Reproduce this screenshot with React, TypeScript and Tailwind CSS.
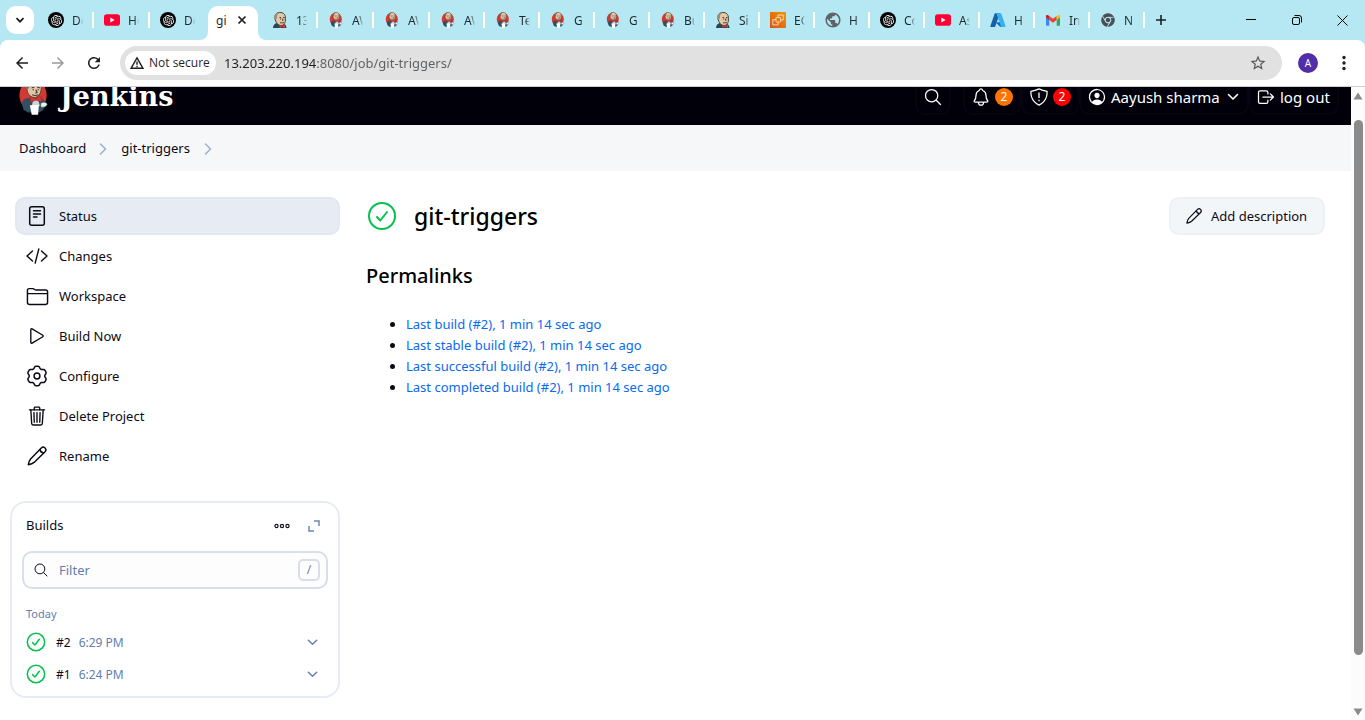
import type { ReactNode } from "react";
import { SiOpenai } from "react-icons/si";
import { FaChrome } from "react-icons/fa";
import { MdPublic, MdStarBorder, MdArrowBack, MdArrowForward, MdRefresh } from "react-icons/md";
import {
  IoSearchOutline,
  IoNotificationsOutline,
  IoShieldOutline,
  IoPersonCircleOutline,
  IoLogOutOutline,
  IoTrashOutline,
  IoFolderOutline,
  IoPlayOutline,
} from "react-icons/io5";

/* ---------- favicons ---------- */

function Butler({ className }: { className: string }) {
  return (
    <svg viewBox="0 0 32 40" className={className} aria-hidden="true">
      <ellipse cx="15.500" cy="18" rx="15" ry="17" fill="#d33833" />
      <path d="M3 27c1-4 4-6 8-6h9c6 0 9 3 10 8l-4 6-4 2H10l-5-3z" fill="#335061" />
      <path d="M8.500 10C8 4 12 .5 17 1c6 .6 8 5 7.500 10-.3 5-3 9.500-7.500 9.500-5 0-8-4.500-8.500-10.500z" fill="#dfc5a6" stroke="#49372c" strokeWidth="1" />
      <path d="M8.500 12C6.500 5 10 0 17 .8c-4 1.700-5.500 3.700-5.500 7.200 0 2-1 3-3 4z" fill="#81745f" />
      <path d="M14 10l3-1m3 0l3 1M15 12h1.500m4 0h1.500M18.500 12l1.500 3-2 .8M14.500 17.500c2.500 1.200 4.500 1.200 7 0" stroke="#49372c" strokeWidth="1.300" fill="none" />
      <path d="M16 22l-2 8h9l-2-8z" fill="#c9d6de" />
      <path d="M12.500 19.500l6 2.500 6-2.500.5 6-6.500-2-6 2.500z" fill="#d33833" stroke="#8e1f1c" strokeWidth="0.500" />
      <path d="M12 29l10-.5-1 11h-7z" fill="#fff" />
      <path d="M24 27c3-2 7-1 7 1s-3 4-7 3z" fill="#f0efe8" stroke="#335061" strokeWidth="0.600" />
    </svg>
  );
}

function ButlerBust() {
  return (
    <svg viewBox="0 0 16 16" className="size-4 shrink-0" aria-hidden="true">
      <path d="M1 16c0-3 2-4.500 4-5l5 .5c3 0 4.500 2 4.500 4.500z" fill="#2d4452" />
      <path d="M3 6C2.500 2 5 .5 8 .5s5.500 1.500 5.500 6c0 4-1 7-4.500 7-3 0-5.500-3-6-7.500z" fill="#e3c9a8" stroke="#4a4038" strokeWidth="1" />
      <path d="M2.500 8C1 3.500 4 .2 8 .4 5.500 1.500 5 3 5 5.500 5 7 4 8 2.500 8z" fill="#9a8f80" />
      <path d="M7.500 5.500h1.500m2 0h1.500M8 7h1m2.500 0h.8M10 6.500l1 2.500M8 10.800h4" stroke="#4a4038" strokeWidth="1" fill="none" />
      <path d="M7.500 12.500l2.500 1.500 3-1.500v3.300L10 14.700l-2.500 1.300z" fill="#d33833" />
    </svg>
  );
}

function OpenAi() {
  return (
    <span className="flex size-4 shrink-0 items-center justify-center rounded-full bg-black text-white">
      <SiOpenai className="size-[11px]" />
    </span>
  );
}

function YouTube() {
  return (
    <svg viewBox="0 0 16 16" className="size-4 shrink-0" aria-hidden="true">
      <rect x="0" y="2.300" width="16" height="11.400" rx="2.800" fill="#ff0033" />
      <path d="M6.300 5.600l4.300 2.400-4.300 2.400z" fill="#fff" />
    </svg>
  );
}

function Ec2() {
  return (
    <svg viewBox="0 0 16 16" className="size-4 shrink-0" aria-hidden="true">
      <defs>
        <linearGradient id="ec2" x1="0" y1="1" x2="1" y2="0">
          <stop offset="0" stopColor="#d4541c" />
          <stop offset="1" stopColor="#f79400" />
        </linearGradient>
      </defs>
      <rect width="16" height="16" fill="url(#ec2)" />
      <g fill="none" stroke="#fbe3c4" strokeWidth="0.900">
        <rect x="6" y="5.500" width="4.500" height="4.500" rx="0.600" />
        <path d="M8 5.500V3h5.300v5H10.500M6 7.700H2.800v5.200H8V10" />
      </g>
    </svg>
  );
}

function Azure() {
  return (
    <svg viewBox="0 0 16 16" className="size-4 shrink-0" aria-hidden="true">
      <path d="M5.300 1.200h4.600L5.200 14.500c-.1.300-.4.500-.8.500H1.200c-.6 0-1-.6-.8-1.100L4.600 1.700c.1-.3.400-.5.700-.5z" fill="#1560a8" />
      <path d="M11.800 10.300H5.500l4.300 4.200c.2.300.6.500 1 .5h3z" fill="#0a70c4" />
      <path d="M11.300 1.700c-.1-.3-.4-.5-.8-.5H5.700c.4 0 .7.200.8.500l4.300 12.200c.2.500-.2 1.100-.8 1.100h4.700c.6 0 1-.6.800-1.100z" fill="#38b0ee" />
    </svg>
  );
}

function Gmail() {
  return (
    <svg viewBox="0 0 16 16" className="size-4 shrink-0" aria-hidden="true">
      <path d="M1 4v8.700c0 .6.400 1 1 1h2.300V7z" fill="#4285f4" />
      <path d="M15 4v8.700c0 .6-.4 1-1 1h-2.300V7z" fill="#34a853" />
      <path d="M4.300 8V4L8 6.800 11.700 4v4L8 10.800z" fill="#ea4335" />
      <path d="M1 4v1.600L4.300 8V4l-.8-.6C2.500 2.600 1 3 1 4z" fill="#c5221f" />
      <path d="M15 4v1.600L11.700 8V4l.8-.6c1-.8 2.500-.4 2.500.6z" fill="#fbbc04" />
    </svg>
  );
}

const jenkinsFav = <Butler className="h-4 w-4 shrink-0" />;

type Tab = { icon: ReactNode; title: string };

const leftTabs: Tab[] = [
  { icon: <OpenAi />, title: "De" },
  { icon: <YouTube />, title: "Ho" },
  { icon: <OpenAi />, title: "De" },
];
const midTabs: Tab[] = [
  { icon: <ButlerBust />, title: "13" },
  { icon: jenkinsFav, title: "AW" },
  { icon: jenkinsFav, title: "AW" },
];
const rightTabs: Tab[] = [
  { icon: jenkinsFav, title: "AW" },
  { icon: jenkinsFav, title: "Te" },
  { icon: jenkinsFav, title: "G" },
  { icon: jenkinsFav, title: "G" },
  { icon: jenkinsFav, title: "Bu" },
  { icon: <ButlerBust />, title: "Si" },
  { icon: <Ec2 />, title: "EC" },
  { icon: <MdPublic className="-m-px size-[18px] shrink-0 text-[#5f6368]" />, title: "H" },
  { icon: <OpenAi />, title: "Co" },
  { icon: <YouTube />, title: "As" },
  { icon: <Azure />, title: "H" },
  { icon: <Gmail />, title: "In" },
  { icon: <FaChrome className="m-px size-[14px] shrink-0 text-[#4a4d51]" />, title: "N" },
];

function BrowserTab({ tab, width, last }: { tab: Tab; width: string; last?: boolean }) {
  return (
    <button type="button" className={`flex h-4 shrink-0 items-center pl-[10px] ${width}`}>
      {tab.icon}
      <span className="ml-2 w-[11px] overflow-hidden mask-r-from-60% pt-px text-left text-xs whitespace-nowrap text-[#1f2a2e]">
        {tab.title}
      </span>
      {!last && <span className="ml-auto h-4 w-[2px] bg-white" />}
    </button>
  );
}

function TabStrip() {
  return (
    <div className="flex h-10 items-center bg-[#b5e8f2] pl-[6px]">
      <button type="button" aria-label="Search tabs" className="flex h-7 w-7 shrink-0 items-center justify-center rounded-[10px] bg-white">
        <svg viewBox="0 0 10 10" className="size-[10px]" aria-hidden="true">
          <path d="M1.500 3.200L5 6.700l3.500-3.500" fill="none" stroke="#1f1f1f" strokeWidth="1.800" />
        </svg>
      </button>
      <div className="flex items-center pl-1">
        {leftTabs.map((t, i) => (
          <BrowserTab key={i} tab={t} width="w-14" last={i === 2} />
        ))}
      </div>
      <div className="relative ml-[2px] flex h-[34px] w-[50px] shrink-0 items-center self-end rounded-t-[10px] bg-white pb-[6px] pl-2">
        <svg viewBox="0 0 8 8" className="absolute bottom-0 -left-2 size-2" aria-hidden="true">
          <path d="M8 0v8H0a8 8 0 0 0 8-8z" fill="#fff" />
        </svg>
        <svg viewBox="0 0 8 8" className="absolute -right-2 bottom-0 size-2" aria-hidden="true">
          <path d="M0 0v8h8a8 8 0 0 1-8-8z" fill="#fff" />
        </svg>
        <span className="w-[10px] overflow-hidden pt-px text-xs whitespace-nowrap text-[#1f1f1f]">git</span>
        <button type="button" aria-label="Close tab" className="ml-2 flex size-4 items-center justify-center">
          <svg viewBox="0 0 10 10" className="size-[10px]" aria-hidden="true">
            <path d="M1.500 1.500l7 7m0-7l-7 7" stroke="#1f1f1f" strokeWidth="1.700" />
          </svg>
        </button>
      </div>
      <div className="flex items-center pl-1">
        {midTabs.map((t, i) => (
          <BrowserTab key={i} tab={t} width="w-14" />
        ))}
        {rightTabs.map((t, i) => (
          <BrowserTab key={i} tab={t} width="w-[55px]" />
        ))}
      </div>
      <button type="button" aria-label="New tab" className="ml-2 flex size-4 shrink-0 items-center justify-center">
        <svg viewBox="0 0 12 12" className="size-3" aria-hidden="true">
          <path d="M6 1v10M1 6h10" stroke="#1f1f1f" strokeWidth="1.600" />
        </svg>
      </button>
      <div className="ml-auto flex">
        <button type="button" aria-label="Minimize" className="flex h-8 w-[46px] items-center justify-center">
          <svg viewBox="0 0 10 10" className="size-[10px]" aria-hidden="true">
            <path d="M0 4.500h10" stroke="#000" strokeWidth="1" />
          </svg>
        </button>
        <button type="button" aria-label="Restore" className="flex h-8 w-[46px] items-center justify-center">
          <svg viewBox="0 0 10 10" className="size-[10px]" fill="none" stroke="#000" aria-hidden="true">
            <rect x="0.500" y="2.500" width="7" height="7" rx="1.500" />
            <path d="M2.500.5H7A2.500 2.500 0 0 1 9.500 3v4.500" />
          </svg>
        </button>
        <button type="button" aria-label="Close" className="flex h-8 w-[45px] items-center justify-center">
          <svg viewBox="0 0 11 11" className="size-[11px]" aria-hidden="true">
            <path d="M.5.5l10 10m0-10l-10 10" stroke="#000" strokeWidth="1" />
          </svg>
        </button>
      </div>
    </div>
  );
}

function Toolbar() {
  return (
    <div className="bg-[#b5e8f2]">
      <div className="flex h-[47px] items-center rounded-t-lg border-b border-[#cfcfcf] bg-white">
        <div className="flex w-[120px] shrink-0 items-center gap-[18px] pl-[13px]">
          <button type="button" aria-label="Back"><MdArrowBack className="size-[18px] text-[#1f1f1f]" /></button>
          <button type="button" aria-label="Forward"><MdArrowForward className="size-[18px] text-[#9a9a9a]" /></button>
          <button type="button" aria-label="Reload"><MdRefresh className="size-[18px] text-[#1f1f1f]" /></button>
        </div>
        <div className="flex h-[34px] flex-1 items-center rounded-full bg-[#e1e1e1] pr-[15px] pl-[5px]">
          <button type="button" className="flex h-6 w-[91px] shrink-0 items-center gap-[5px] rounded-full bg-white pl-[5px] font-['Open_Sans',sans-serif] text-xs font-medium text-[#1f1f1f]">
            <svg viewBox="0 0 14 14" className="size-[14px] shrink-0" fill="none" stroke="#1f1f1f" strokeWidth="1.400" aria-hidden="true">
              <path d="M7 1.800L13 12.300H1z" strokeLinejoin="miter" />
              <path d="M7 5.500v3.300M7 9.800v1.400" />
            </svg>
            <span className="whitespace-nowrap">Not secure</span>
          </button>
          <input
            type="text"
            aria-label="Address"
            defaultValue="13.203.220.194:8080/job/git-triggers/"
            className="ml-2 min-w-0 flex-1 bg-linear-to-r from-[#1f1f1f] from-[92px] to-[#5c5e61] to-[92px] bg-clip-text pt-px text-[13px] text-transparent outline-none"
          />
          <button type="button" aria-label="Bookmark this page"><MdStarBorder className="size-[18px] text-[#55575a]" /></button>
        </div>
        <div className="flex w-[83px] shrink-0 items-center pl-4">
          <button type="button" className="flex size-5 items-center justify-center rounded-full bg-[#512da8] text-[10px] text-white">A</button>
          <button type="button" aria-label="Menu" className="ml-4 flex w-5 justify-center">
            <svg viewBox="0 0 4 16" className="h-4 w-1" fill="#1f1f1f" aria-hidden="true">
              <circle cx="2" cy="2.500" r="1.700" />
              <circle cx="2" cy="8" r="1.700" />
              <circle cx="2" cy="13.500" r="1.700" />
            </svg>
          </button>
        </div>
      </div>
    </div>
  );
}

/* ---------- Jenkins page ---------- */

function Chevron({ className }: { className: string }) {
  return (
    <svg viewBox="0 0 12 12" className={className} fill="none" stroke="currentColor" strokeWidth="1.600" strokeLinecap="round" strokeLinejoin="round" aria-hidden="true">
      <path d="M1.500 3.500L6 8l4.500-4.500" />
    </svg>
  );
}

function Crumb() {
  return (
    <svg viewBox="0 0 8 12" className="h-3 w-2 text-[#9db1d0]" fill="none" stroke="currentColor" strokeWidth="1.600" strokeLinecap="round" strokeLinejoin="round" aria-hidden="true">
      <path d="M1.500 1L6.500 6l-5 5" />
    </svg>
  );
}

function Pencil({ className }: { className: string }) {
  return (
    <svg viewBox="0 0 24 24" className={className} fill="none" stroke="currentColor" strokeWidth="1.600" strokeLinecap="round" strokeLinejoin="round" aria-hidden="true">
      <path d="M2.500 21.500c.5-2.500 1-4.500 2.500-6.300L16.700 3.200a2.900 2.900 0 0 1 4.100 4.100L8.800 19c-1.800 1.500-3.800 2-6.300 2.500z" />
      <path d="M15.300 4.800c.2 2.200 1.700 3.700 3.900 3.900" />
    </svg>
  );
}

function Success({ className }: { className: string }) {
  return (
    <svg viewBox="0 0 30 30" className={className} fill="none" stroke="#06c150" strokeLinecap="round" strokeLinejoin="round" aria-label="Success">
      <circle cx="15" cy="15" r="13" />
      <path d="M10 16l3.300 3.500L20 11" />
    </svg>
  );
}

/* Six-lobed gear outline, sampled around the centre of a 22-unit box. */
const gearPath =
  Array.from({ length: 72 }, (_, i) => {
    const a = (i / 72) * 2 * Math.PI;
    const wave = Math.cos(6 * a);
    const r = 8.7 + 1.1 * Math.tanh(1.8 * wave + 0.6);
    const x = 11 + r * Math.sin(a);
    const y = 11 - r * Math.cos(a);
    return `${i === 0 ? "M" : "L"}${x.toFixed(2)} ${y.toFixed(2)}`;
  }).join("") + "Z";

function Gear() {
  return (
    <svg viewBox="0 0 22 22" className="size-[22px]" fill="none" stroke="currentColor" strokeWidth="1.500" strokeLinejoin="round" aria-hidden="true">
      <path d={gearPath} />
      <circle cx="11" cy="11" r="2.900" />
    </svg>
  );
}

function Header() {
  return (
    <header className="flex h-14 items-center justify-end bg-[#01000a] pr-3 text-[15px] text-white">
      <a href="#" className="mr-auto flex items-center gap-3 pl-[19px]">
        <Butler className="h-10 w-[29px]" />
        <span className="font-['DejaVu_Serif',serif] text-[27px] leading-8 font-bold">Jenkins</span>
      </a>
      <button type="button" aria-label="Search" className="mr-3 flex h-9 w-9 items-center justify-center rounded-[10px] border-2 border-[#05040f]">
        <IoSearchOutline className="size-5" />
      </button>
      <button type="button" aria-label="Notifications" className="flex h-9 w-[58px] items-center gap-1 rounded-[10px] border-2 border-[#05040f] pl-[6px]">
        <IoNotificationsOutline className="size-5" />
        <span className="flex size-[18px] items-center justify-center rounded-full bg-[#ff7300] text-xs">2</span>
      </button>
      <button type="button" aria-label="Security warnings" className="flex h-9 w-[58px] items-center gap-1 rounded-[10px] border-2 border-[#05040f] pl-[6px]">
        <span className="relative">
          <IoShieldOutline className="size-5" />
          <svg viewBox="0 0 20 20" className="absolute inset-0 size-5" aria-hidden="true">
            <path d="M10 5.500v5.500M10 12.800v1.400" stroke="#fff" strokeWidth="1.300" />
          </svg>
        </span>
        <span className="flex size-[18px] items-center justify-center rounded-full bg-[#fe0000] text-xs">2</span>
      </button>
      <button type="button" className="flex h-9 w-[170px] items-center rounded-[10px] border-2 border-[#05040f] pl-[6px]">
        <IoPersonCircleOutline className="size-5" />
        <span className="ml-1 whitespace-nowrap">Aayush sharma</span>
        <Chevron className="mr-2 ml-auto size-3" />
      </button>
      <button type="button" className="flex h-9 w-[90px] items-center gap-1 rounded-[10px] border-2 border-[#05040f] pl-[5px]">
        <IoLogOutOutline className="size-5" />
        <span className="whitespace-nowrap">log out</span>
      </button>
    </header>
  );
}

const tasks: { label: string; icon: ReactNode }[] = [
  {
    label: "Status",
    icon: (
      <svg viewBox="0 0 22 22" className="size-[22px]" fill="none" stroke="currentColor" strokeWidth="1.500" strokeLinecap="round" aria-hidden="true">
        <rect x="3.700" y="1.700" width="14.600" height="18.600" rx="2" />
        <path d="M7.500 5.700h7M7.500 8.900h7M7.500 12.100h3.500" />
      </svg>
    ),
  },
  {
    label: "Changes",
    icon: (
      <svg viewBox="0 0 22 22" className="size-[22px]" fill="none" stroke="currentColor" strokeWidth="1.400" strokeLinecap="round" strokeLinejoin="round" aria-hidden="true">
        <path d="M6.500 6L1 11l5.500 5M15.500 6l5.500 5-5.500 5M12.800 4L9.200 18" />
      </svg>
    ),
  },
  { label: "Workspace", icon: <IoFolderOutline className="size-[23px]" /> },
  { label: "Build Now", icon: <IoPlayOutline className="size-[22px]" /> },
  { label: "Configure", icon: <Gear /> },
  { label: "Delete Project", icon: <IoTrashOutline className="size-[22px]" /> },
  { label: "Rename", icon: <Pencil className="size-[22px]" /> },
];

const builds = [
  { id: "#2", time: "6:29 PM" },
  { id: "#1", time: "6:24 PM" },
];

const permalinks = ["Last build", "Last stable build", "Last successful build", "Last completed build"];

function Builds() {
  return (
    <section className="mt-[26px] -ml-[5px] rounded-2xl border-2 border-[#e7ebf3] px-[10px] pt-[10px] pb-[6px]">
      <div className="flex h-[26px] items-center pl-1">
        <h2>Builds</h2>
        <button type="button" aria-label="More actions" className="ml-auto">
          <svg viewBox="0 0 16 6" className="h-[6px] w-4" fill="none" stroke="#14141f" strokeWidth="1.200" aria-hidden="true">
            <circle cx="2.500" cy="3" r="1.600" />
            <circle cx="8" cy="3" r="1.600" />
            <circle cx="13.500" cy="3" r="1.600" />
          </svg>
        </button>
        <button type="button" aria-label="Expand" className="mr-2 ml-[18px]">
          <svg viewBox="0 0 12 12" className="size-3" fill="none" stroke="#6d89b4" strokeWidth="1.500" aria-hidden="true">
            <path d="M6 1h5v5M1 6v5h5" />
          </svg>
        </button>
      </div>
      <label className="mt-3 flex h-[38px] items-center rounded-[10px] border-2 border-[#d8deea] bg-[#fdfdfd] pr-[6px] pl-[9px]">
        <IoSearchOutline className="size-4 shrink-0" />
        <span className="sr-only">Filter builds</span>
        <input type="text" placeholder="Filter" className="ml-[10px] min-w-0 flex-1 bg-transparent pt-px outline-none placeholder:text-[#6180ad]" />
        <kbd className="flex h-[22px] w-[22px] items-center justify-center rounded-[5px] border-2 border-[#d8deea] font-sans text-xs text-[#6180ad]">/</kbd>
      </label>
      <h3 className="mt-4 pl-1 text-[11px] leading-[18px] text-[#6180ad]">Today</h3>
      <ul className="mt-[3px]">
        {builds.map((b) => (
          <li key={b.id} className="flex h-8 items-center pl-1 text-xs">
            <Success className="size-5 stroke-[2.3]" />
            <a href="#" className="ml-[10px] pt-[2px]">{b.id}</a>
            <span className="ml-2 pt-[2px] text-[#6180ad]">{b.time}</span>
            <button type="button" aria-label={`Build ${b.id} menu`} className="mr-[10px] ml-auto text-[#6180ad]">
              <Chevron className="size-[11px]" />
            </button>
          </li>
        ))}
      </ul>
    </section>
  );
}

function JenkinsPage() {
  return (
    <div className="-mt-[18px] min-w-0 flex-1 text-[#0b0b16]">
      <Header />
      <nav aria-label="Breadcrumb" className="flex h-[46px] items-center bg-[#f6f7f9] pt-px pl-[19px]">
        <a href="#">Dashboard</a>
        <span className="ml-[13px]"><Crumb /></span>
        <a href="#" className="ml-[14px]">git-triggers</a>
        <span className="ml-[14px]"><Crumb /></span>
      </nav>
      <div className="flex items-start pt-[26px] pr-[26px] pl-[15px]">
        <aside className="w-[325px] shrink-0">
          <nav aria-label="Project" className="flex flex-col gap-[2px]">
            {tasks.map((t, i) => (
              <a
                key={t.label}
                href="#"
                className={`flex h-[38px] items-center rounded-[10px] border-2 pl-2 ${i === 0 ? "border-[#e2e8f1] bg-[#e7ebf3]" : "border-transparent"}`}
              >
                <span className="flex w-6 justify-center">{t.icon}</span>
                <span className="ml-[10px] pt-[2px]">{t.label}</span>
              </a>
            ))}
          </nav>
          <Builds />
        </aside>
        <main className="ml-[26px] min-w-0 flex-1">
          <div className="flex h-[38px] items-center">
            <Success className="mr-[17px] ml-px size-[30px] stroke-2" />
            <h1 className="text-[23px] leading-8 font-medium text-black">git-triggers</h1>
            <button type="button" className="ml-auto flex h-[38px] w-[156px] items-center gap-2 rounded-[10px] border-2 border-[#edf1f5] bg-[#f3f6f9] pl-[14px]">
              <Pencil className="size-[18px]" />
              <span className="pt-[2px] whitespace-nowrap">Add description</span>
            </button>
          </div>
          <h2 className="mt-[25px] text-xl leading-8 font-medium text-black">Permalinks</h2>
          <ul className="mt-[22px] list-disc pl-10 leading-[21px]">
            {permalinks.map((p) => (
              <li key={p}>
                <a href="#" className="text-[#0b6aed]">{p} (#2), 1 min 14 sec ago</a>
              </li>
            ))}
          </ul>
        </main>
      </div>
    </div>
  );
}

function ScrollRail() {
  return (
    <div aria-hidden="true" className="flex w-[14px] shrink-0 flex-col items-center bg-[#fcfcfc] pt-[5px] pb-1">
      <svg viewBox="0 0 10 8" className="h-2 w-[10px] shrink-0"><path d="M5 .5L9.500 7.500H.5z" fill="#8b8b8b" /></svg>
      <div className="mt-5 mb-[53px] w-[9px] flex-1 rounded-full bg-[#8b8b8b]" />
      <svg viewBox="0 0 10 8" className="h-2 w-[10px] shrink-0"><path d="M5 7.500L9.500.5H.5z" fill="#8b8b8b" /></svg>
    </div>
  );
}

export default function App() {
  return (
    <div className="flex h-screen flex-col overflow-hidden bg-white font-['Noto_Sans',sans-serif] text-[13px]">
      <TabStrip />
      <Toolbar />
      <div className="flex min-h-0 flex-1 overflow-hidden">
        <JenkinsPage />
        <ScrollRail />
      </div>
    </div>
  );
}
